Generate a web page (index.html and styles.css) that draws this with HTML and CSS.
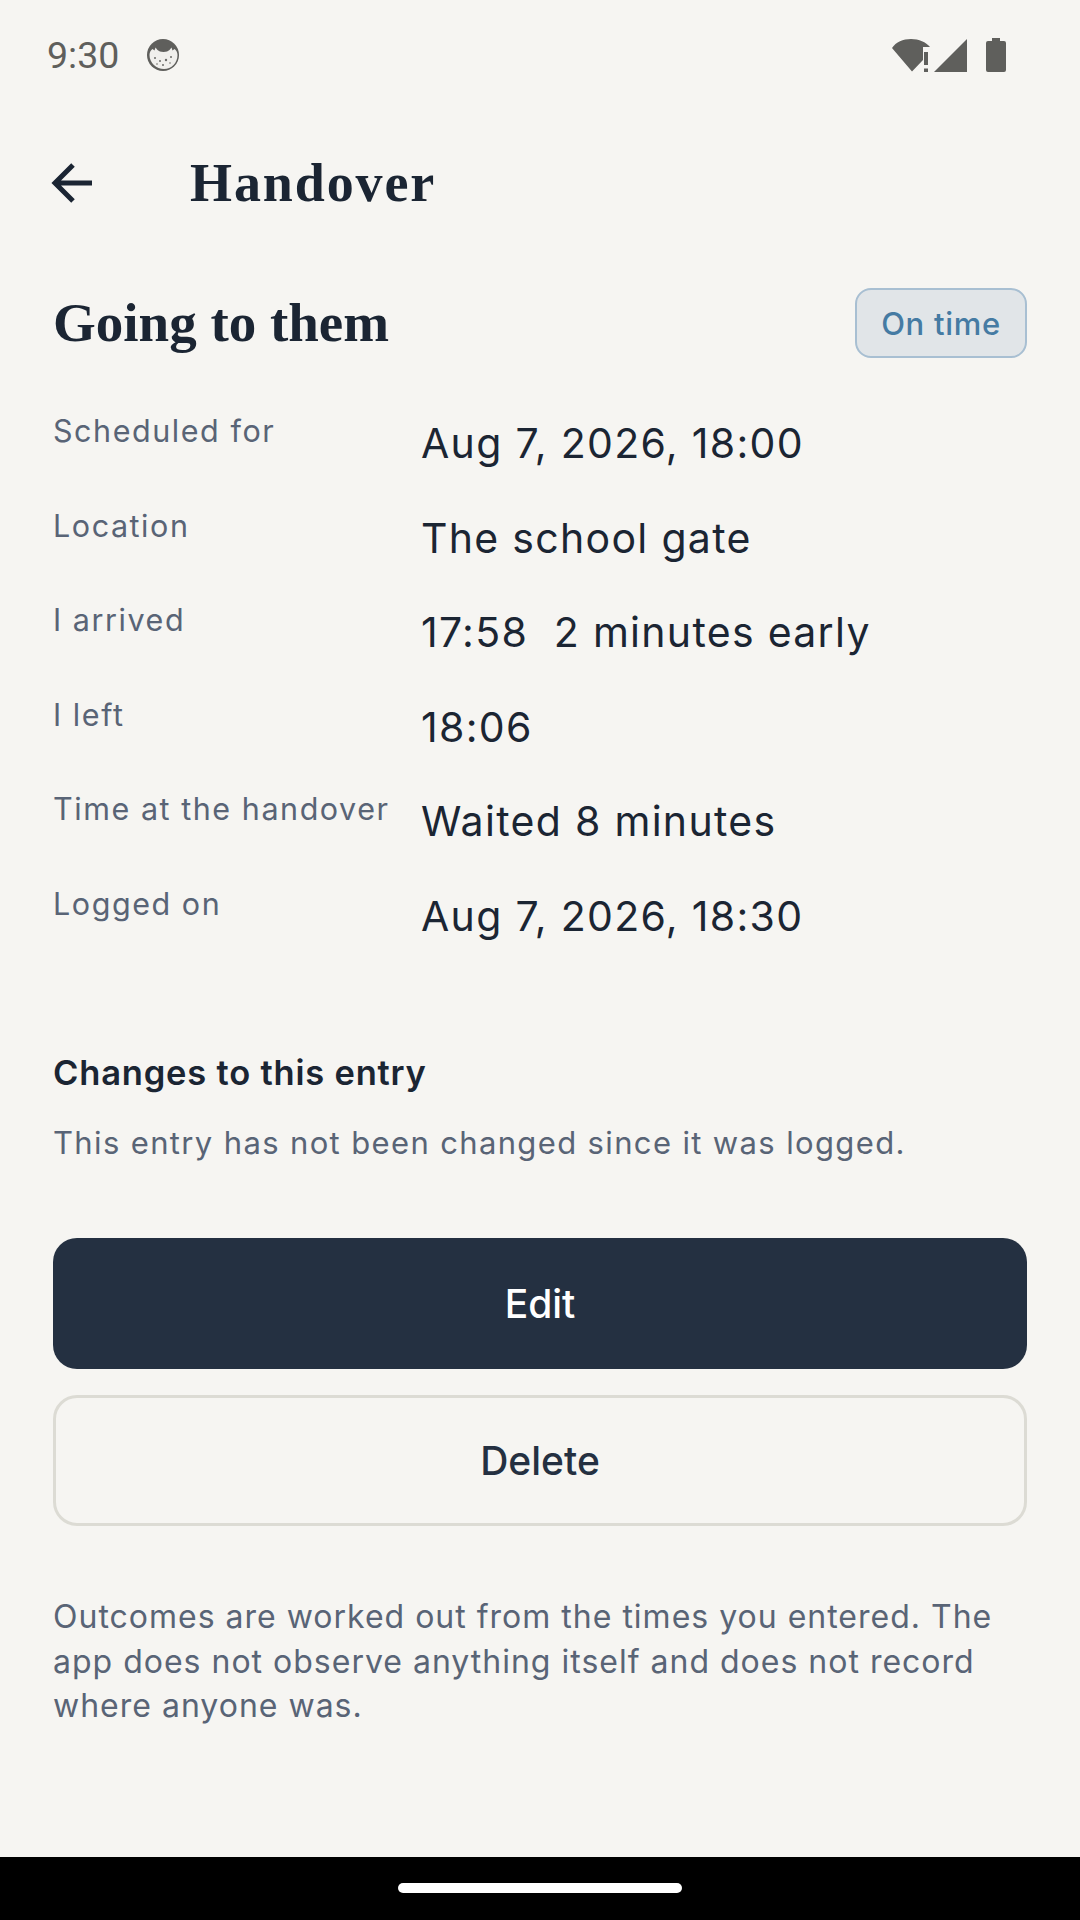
FILE: index.html
```html
<!DOCTYPE html>
<html lang="en">
<head>
<meta charset="utf-8">
<title>Handover</title>
<link rel="stylesheet" href="styles.css">
</head>
<body>
<div class="screen">
  <div class="status">
    <div class="status-left">
      <span class="clock">9:30</span>
      <svg class="cat" viewBox="0 0 34 34" width="34" height="34"><circle cx="17" cy="17" r="16" fill="#5f5f5c"/><path d="M3.500 17c0-3 1.500-5 3-6l2 1.500 1-3 2 2.500c1.500 1 3 2 6 2s4.500-1 6-2l2-2.500 1 3 2-1.500c1.500 1 3 3 3 6 0 8-6 14-13.500 14S3.500 25 3.500 17z" fill="#f0efec"/><g fill="#6b6b68"><circle cx="9" cy="20" r="1"/><circle cx="14" cy="23" r="1"/><circle cx="20" cy="22" r="1.200"/><circle cx="25" cy="19" r="1"/><circle cx="17" cy="27" r="1"/><circle cx="11" cy="26" r=".8"/><circle cx="24" cy="25" r=".8"/></g></svg>
    </div>
    <div class="status-right">
      <svg viewBox="0 0 75 33" width="75" height="33" class="sig"><path d="M0 9C4 3 11 0 19 0s15 3 19 8H31V21L20 32.500z" fill="#5f5f5c"/><rect x="32" y="13" width="4" height="13" fill="#5f5f5c"/><rect x="32" y="29.500" width="4" height="3.500" fill="#5f5f5c"/><path d="M42 33 75 0V33z" fill="#5f5f5c"/></svg>
      <svg viewBox="0 0 20 34" width="20" height="34" class="bat"><path d="M6 0h8v3h4a2 2 0 0 1 2 2v27a2 2 0 0 1-2 2H2a2 2 0 0 1-2-2V5a2 2 0 0 1 2-2h4z" fill="#5f5f5c"/></svg>
    </div>
  </div>

  <header class="appbar">
    <svg class="back" viewBox="0 0 42 42" width="42" height="42"><path d="M41 21H5M22 3 4 21 22 39" fill="none" stroke="#1b2533" stroke-width="5"/></svg>
    <h1 class="appbar-title">Handover</h1>
  </header>

  <main class="content">
    <div class="title-row">
      <h2 class="title">Going to them</h2>
      <span class="badge">On time</span>
    </div>

    <dl class="facts">
      <div class="fact"><dt>Scheduled for</dt><dd>Aug 7, 2026, 18:00</dd></div>
      <div class="fact"><dt>Location</dt><dd>The school gate</dd></div>
      <div class="fact"><dt>I arrived</dt><dd>17:58&nbsp; 2 minutes early</dd></div>
      <div class="fact"><dt>I left</dt><dd>18:06</dd></div>
      <div class="fact"><dt>Time at the handover</dt><dd>Waited 8 minutes</dd></div>
      <div class="fact"><dt>Logged on</dt><dd>Aug 7, 2026, 18:30</dd></div>
    </dl>

    <section class="changes">
      <h3>Changes to this entry</h3>
      <p>This entry has not been changed since it was logged.</p>
    </section>

    <div class="actions">
      <button class="btn btn-primary">Edit</button>
      <button class="btn btn-outline">Delete</button>
    </div>

    <p class="note">Outcomes are worked out from the times you entered. The app does not observe anything itself and does not record where anyone was.</p>
  </main>

  <div class="navbar"><span class="pill"></span></div>
</div>
</body>
</html>
```

FILE: styles.css
```css
* { box-sizing: border-box; }
html, body { margin: 0; padding: 0; }
body { background: #f6f5f2; font-family: Inter, "Noto Sans", sans-serif; color: #1b2533; }
.screen { width: 1080px; height: 1920px; display: flex; flex-direction: column; background: #f6f5f2; overflow: hidden; }
.status { height: 110px; display: flex; justify-content: space-between; align-items: center; padding: 0 74px 0 47px; }
.status-left { display: flex; align-items: center; gap: 27px; }
.clock { font-family: Roboto, sans-serif; font-size: 37.500px; color: #5f5f5c; }
.cat { display: block; }
.status-right { display: flex; align-items: center; gap: 19px; }
.sig, .bat { display: block; }
.appbar { height: 146px; display: flex; align-items: center; padding-left: 51px; gap: 92px; }
.back { display: block; }
.appbar-title { margin: 0; margin-left: 5px; font-family: "Liberation Serif", serif; font-weight: 700; font-size: 54px; letter-spacing: 1.9px; color: #1b2533; }
.content { flex: 1; padding: 32px 53px 0; display: flex; flex-direction: column; }
.title-row { display: flex; justify-content: space-between; align-items: center; height: 70px; }
.title { margin: -2px 0 0; font-family: "Liberation Serif", serif; font-weight: 700; font-size: 55px; color: #1b2533; }
.badge { width: 172px; height: 70px; display: flex; align-items: center; justify-content: center; background: #e1e5e8; border: 2px solid #a8bfd2; border-radius: 16px; font-size: 31px; font-weight: 500; color: #457ba3; letter-spacing: 0.7px; }
.facts { margin: 52px 0 0; display: flex; flex-direction: column; }
.fact { display: grid; grid-template-columns: 368px 1fr; height: 94.500px; }
.fact dt { font-size: 30.500px; color: #596476; letter-spacing: 1.55px; font-weight: 400; padding-top: 2px; white-space: nowrap; }
.fact dd { margin: 0; font-size: 41px; color: #1b2533; letter-spacing: 1.3px; padding-top: 8px; white-space: nowrap; }
.changes { margin-top: 75px; }
.changes h3 { margin: 0; font-size: 34.500px; font-weight: 600; color: #1b2533; letter-spacing: 0.8px; }
.changes p { margin: 31px 0 0; font-size: 31px; color: #596476; letter-spacing: 1.36px; }
.actions { margin-top: 77px; display: flex; flex-direction: column; gap: 26px; }
.btn { width: 100%; height: 131px; border-radius: 24px; font-family: Inter, sans-serif; font-size: 39px; font-weight: 550; }
.btn-primary { background: #243041; color: #fff; border: none; }
.btn-outline { background: transparent; color: #243041; border: 3px solid #dcdbd4; }
.note { margin: 69px 0 0; font-size: 32px; line-height: 44.600px; color: #596476; letter-spacing: 1px; }
.navbar { height: 63px; background: #000; display: flex; justify-content: center; padding-top: 26px; }
.pill { width: 284px; height: 10px; border-radius: 5px; background: #fff; }
```
